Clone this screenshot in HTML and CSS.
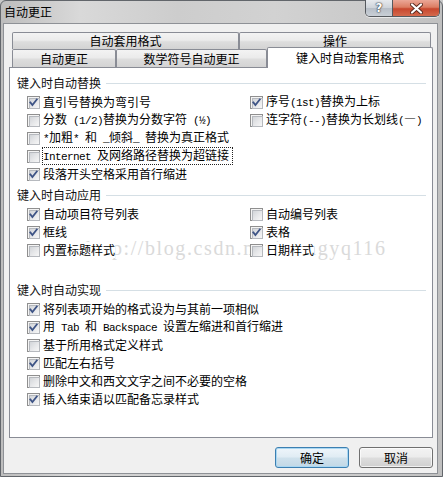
FILE: index.html
```html
<!DOCTYPE html>
<html lang="zh-CN">
<head>
<meta charset="utf-8">
<title>自动更正</title>
<link rel="stylesheet" href="styles.css">
</head>
<body>
<div class="window">
  <div class="titlebar">
    <span class="title">自动更正</span>
    <div class="caption-btns">
      <span class="cbtn help">?</span>
      <span class="cbtn close">
        <svg width="13" height="11" viewBox="0 0 13 11">
          <path d="M2 1.5 L11 9.5 M11 1.5 L2 9.5" stroke="#5a2a20" stroke-width="4" fill="none" stroke-linecap="round"/>
          <path d="M2 1.5 L11 9.5 M11 1.5 L2 9.5" stroke="#ffffff" stroke-width="2.2" fill="none" stroke-linecap="round"/>
        </svg>
      </span>
    </div>
  </div>
  <div class="client">
    <div class="tabs">
      <div class="tab-row back">
        <div class="tab t1">自动套用格式</div>
        <div class="tab t2">操作</div>
      </div>
      <div class="tab-row front">
        <div class="tab t3">自动更正</div>
        <div class="tab t4">数学符号自动更正</div>
        <div class="tab sel">键入时自动套用格式</div>
      </div>
    </div>
    <div class="panel">
      <div class="watermark">http://blog.csdn.net/wangyq116</div>
      <div class="group g1">
        <div class="glabel"><span>键入时自动替换</span><i class="rule"></i></div>
        <div class="cols">
          <div class="col left">
            <div class="opt"><span class="cb on"><svg viewBox="0 0 13 13"><path d="M3.3 6.4 L5.4 9 L9.8 3.4" /></svg></span><span class="txt">直引号替换为弯引号</span></div>
            <div class="opt"><span class="cb"></span><span class="txt">分数<span class="m"> (1/2)</span>替换为分数字符<span class="m"> (½)</span></span></div>
            <div class="opt"><span class="cb"></span><span class="txt"><span class="m">*</span>加粗<span class="m">* </span>和<span class="m"> _</span>倾斜<span class="m">_ </span>替换为真正格式</span></div>
            <div class="opt"><span class="cb"></span><span class="txt focus"><span class="m">Internet </span>及网络路径替换为超链接</span></div>
            <div class="opt"><span class="cb on"><svg viewBox="0 0 13 13"><path d="M3.3 6.4 L5.4 9 L9.8 3.4" /></svg></span><span class="txt">段落开头空格采用首行缩进</span></div>
          </div>
          <div class="col right">
            <div class="opt"><span class="cb on"><svg viewBox="0 0 13 13"><path d="M3.3 6.4 L5.4 9 L9.8 3.4" /></svg></span><span class="txt">序号<span class="m">(1st)</span>替换为上标</span></div>
            <div class="opt"><span class="cb"></span><span class="txt">连字符<span class="m">(--)</span>替换为长划线<span class="m">(</span>—<span class="m">)</span></span></div>
          </div>
        </div>
      </div>
      <div class="group g2">
        <div class="glabel"><span>键入时自动应用</span><i class="rule"></i></div>
        <div class="cols">
          <div class="col left">
            <div class="opt"><span class="cb on"><svg viewBox="0 0 13 13"><path d="M3.3 6.4 L5.4 9 L9.8 3.4" /></svg></span><span class="txt">自动项目符号列表</span></div>
            <div class="opt"><span class="cb on"><svg viewBox="0 0 13 13"><path d="M3.3 6.4 L5.4 9 L9.8 3.4" /></svg></span><span class="txt">框线</span></div>
            <div class="opt"><span class="cb"></span><span class="txt">内置标题样式</span></div>
          </div>
          <div class="col right">
            <div class="opt"><span class="cb"></span><span class="txt">自动编号列表</span></div>
            <div class="opt"><span class="cb on"><svg viewBox="0 0 13 13"><path d="M3.3 6.4 L5.4 9 L9.8 3.4" /></svg></span><span class="txt">表格</span></div>
            <div class="opt"><span class="cb"></span><span class="txt">日期样式</span></div>
          </div>
        </div>
      </div>
      <div class="group g3">
        <div class="glabel"><span>键入时自动实现</span><i class="rule"></i></div>
        <div class="col single">
          <div class="opt"><span class="cb on"><svg viewBox="0 0 13 13"><path d="M3.3 6.4 L5.4 9 L9.8 3.4" /></svg></span><span class="txt">将列表项开始的格式设为与其前一项相似</span></div>
          <div class="opt"><span class="cb on"><svg viewBox="0 0 13 13"><path d="M3.3 6.4 L5.4 9 L9.8 3.4" /></svg></span><span class="txt">用<span class="m"> Tab </span>和<span class="m"> Backspace </span>设置左缩进和首行缩进</span></div>
          <div class="opt"><span class="cb"></span><span class="txt">基于所用格式定义样式</span></div>
          <div class="opt"><span class="cb on"><svg viewBox="0 0 13 13"><path d="M3.3 6.4 L5.4 9 L9.8 3.4" /></svg></span><span class="txt">匹配左右括号</span></div>
          <div class="opt"><span class="cb"></span><span class="txt">删除中文和西文文字之间不必要的空格</span></div>
          <div class="opt"><span class="cb on"><svg viewBox="0 0 13 13"><path d="M3.3 6.4 L5.4 9 L9.8 3.4" /></svg></span><span class="txt">插入结束语以匹配备忘录样式</span></div>
        </div>
      </div>
    </div>
    <div class="actions">
      <button class="btn default">确定</button>
      <button class="btn">取消</button>
    </div>
  </div>
</div>
</body>
</html>
```
FILE: styles.css
```css
* { box-sizing: border-box; }

html, body {
  margin: 0;
  padding: 0;
  width: 443px;
  height: 477px;
  overflow: hidden;
  background: #c8c8c8;
}

body {
  font-family: "Noto Sans CJK SC", "Noto Sans", sans-serif;
  font-size: 12px;
  color: #000;
}

.window {
  width: 443px;
  height: 477px;
  border: 1px solid #62666b;
  border-radius: 6px 6px 0 0;
  background: linear-gradient(90deg, #bdbdbd 0%, #d9d9d9 18%, #cdcdcd 40%, #d2d2d2 62%, #c9c9c9 85%, #c0c0c0 100%);
  display: flex;
  flex-direction: column;
  padding: 0 4px 2px 2px;
}

/* ---------- title bar ---------- */
.titlebar {
  height: 22px;
  display: flex;
  align-items: flex-start;
  padding-left: 1px;
}

.title {
  line-height: 22px;
  font-size: 12px;
  color: #000;
}

.caption-btns {
  margin-left: auto;
  margin-top: -1px;
  margin-right: -2px;
  display: flex;
  height: 17px;
  border: 1px solid #55595e;
  border-top: none;
  border-radius: 0 0 5px 5px;
  overflow: hidden;
  box-shadow: 0 1px 0 rgba(255,255,255,0.6);
}

.cbtn {
  height: 16px;
  display: flex;
  align-items: center;
  justify-content: center;
}

.help {
  width: 27px;
  border-right: 1px solid #55595e;
  background: linear-gradient(#e7eaee 0%, #cfd4da 48%, #b7bec7 52%, #c9cfd6 100%);
  color: #fff;
  font-family: "DejaVu Sans", sans-serif;
  font-weight: bold;
  font-size: 12px;
  line-height: 16px;
  text-shadow: 0 0 1px #3c3f44, 0 0 1px #3c3f44, 0 0 2px #3c3f44;
}

.close {
  width: 46px;
  background: linear-gradient(#eba797 0%, #dc7d63 45%, #c8472e 55%, #d46a4d 100%);
}

/* ---------- client ---------- */
.client {
  flex: 1;
  background: #f0f0f0;
  border: 1px solid #8e9196;
  display: flex;
  flex-direction: column;
  padding: 8px 4px 0 5px;
}

.tabs {
  margin-left: 3px;
  display: flex;
  flex-direction: column;
}

.tab-row {
  display: flex;
  align-items: flex-end;
}

.tab-row.back { height: 17px; }
.tab-row.front { height: 18px; }

.tab {
  border: 1px solid #898c95;
  border-bottom: none;
  border-radius: 2px 2px 0 0;
  background: linear-gradient(#f3f3f3 0%, #ebebeb 45%, #dddddd 55%, #d3d3d3 100%);
  display: flex;
  align-items: center;
  justify-content: center;
  font-size: 12px;
  line-height: 14px;
  white-space: nowrap;
}

.back .tab { height: 17px; }
.front .tab { height: 18px; }

.t1 { width: 227px; }
.t2 { width: 192px; }
.t3 { width: 104px; }
.t4 { width: 151px; }

.front .tab.sel {
  width: 166px;
  height: 21px;
  margin-bottom: -1px;
  background: #ffffff;
  position: relative;
  z-index: 2;
  padding-bottom: 1px;
}

/* ---------- panel ---------- */
.panel {
  position: relative;
  width: 424px;
  height: 371px;
  background: #ffffff;
  border: 1px solid #898c95;
  padding: 7px 0 0 7px;
}

.group {
  position: relative;
  z-index: 1;
}

.glabel {
  height: 16px;
  display: flex;
  align-items: center;
  line-height: 16px;
  margin-bottom: 2px;
  color: #111;
}

.rule {
  flex: 1;
  height: 1px;
  background: #d5dfe5;
  margin: 1px 6px 0 5px;
}

.g2 { margin-top: 4px; }
.g3 { margin-top: 23px; }

.cols {
  display: flex;
  padding-left: 10px;
}

.col.left { width: 223px; }
.col.single { padding-left: 10px; }

.opt {
  height: 18px;
  display: flex;
  align-items: center;
  white-space: nowrap;
}

.cb {
  position: relative;
  flex: none;
  width: 13px;
  height: 13px;
  border: 1px solid #8f8f8f;
  background: #f4f4f4;
  padding: 1px;
}

.cb::before {
  content: "";
  display: block;
  width: 9px;
  height: 9px;
  border: 1px solid #b6b9be;
  background: linear-gradient(135deg, #d2d5d9 0%, #e6e7e9 50%, #f7f7f7 100%);
}

.cb svg {
  position: absolute;
  left: -1px;
  top: -1px;
  width: 13px;
  height: 13px;
}

.cb svg path {
  fill: none;
  stroke: #3e5486;
  stroke-width: 1.8;
  stroke-linecap: square;
}

.txt {
  margin-left: 3px;
  line-height: 16px;
  background: #ffffff;
}

.txt.focus {
  margin-left: 2px;
  border: 1px dotted #222;
  line-height: 14px;
  padding-right: 3px;
}

.m {
  font-family: "Liberation Mono", monospace;
  font-size: 11px;
  letter-spacing: -0.6px;
  white-space: pre;
}

.watermark {
  position: absolute;
  z-index: 0;
  left: 76px;
  top: 170px;
  font-family: "Liberation Serif", serif;
  font-size: 20px;
  line-height: 20px;
  letter-spacing: 1.6px;
  color: #dadada;
  pointer-events: none;
  white-space: nowrap;
}

/* ---------- buttons ---------- */
.actions {
  display: flex;
  justify-content: flex-end;
  gap: 10px;
  margin-top: 9px;
}

.btn {
  width: 74px;
  height: 21px;
  padding: 0;
  border: 1px solid #707070;
  border-radius: 3px;
  background: linear-gradient(#f3f3f3 0%, #ececec 48%, #dddddd 52%, #d0d0d0 100%);
  box-shadow: inset 0 0 0 1px rgba(255,255,255,0.7);
  font-family: "Noto Sans CJK SC", sans-serif;
  font-size: 12px;
  line-height: 17px;
  color: #000;
}

.btn.default {
  border-color: #3c7fb1;
  background: linear-gradient(#eef5fa 0%, #e0ecf4 48%, #cfe1ec 52%, #c2d8e6 100%);
  box-shadow: inset 0 0 0 1px #a9d7f2;
}
```
